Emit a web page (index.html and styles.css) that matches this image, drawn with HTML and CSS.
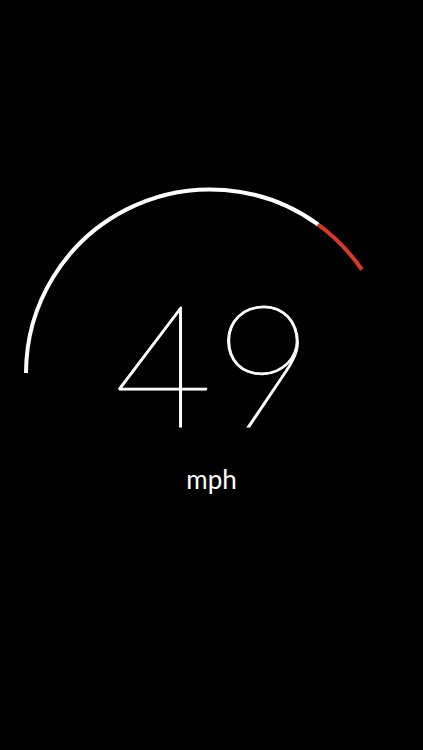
FILE: index.html
```html
<!DOCTYPE html>
<html>
<head>
<meta charset="utf-8">
<link rel="stylesheet" href="styles.css">
</head>
<body>
<main class="screen">
  <section class="gauge">
    <svg class="gauge-arc" width="423" height="200" viewBox="0 0 423 200">
      <path d="M 26 193 A 184 184 0 0 1 318.2 44.6" fill="none" stroke="#ffffff" stroke-width="4"/>
      <path d="M 318.2 44.6 A 184 184 0 0 1 361.8 89.6" fill="none" stroke="#d7392c" stroke-width="4"/>
    </svg>
    <div class="speed">49</div>
    <div class="unit">mph</div>
  </section>
</main>
</body>
</html>
```
FILE: styles.css
```css
html, body {
  margin: 0;
  padding: 0;
  background: #000;
}
.screen {
  width: 423px;
  height: 750px;
  background: #000;
  color: #fff;
  display: flex;
  flex-direction: column;
}
.gauge {
  position: relative;
  margin-top: 180px;
  display: flex;
  flex-direction: column;
  align-items: center;
}
.gauge-arc {
  position: absolute;
  top: 0;
  left: 0;
}
.speed {
  margin-top: 96px;
  font-family: "Lato", "Inter", sans-serif;
  font-weight: 100;
  font-size: 170px;
  line-height: 170px;
  letter-spacing: 2px;
  padding-left: 6px;
  -webkit-text-stroke: 1px #fff;
}
.unit {
  margin-top: 19px;
  font-family: "Lato", "Noto Sans", sans-serif;
  font-weight: 400;
  font-size: 26px;
  line-height: 28px;
}
```
